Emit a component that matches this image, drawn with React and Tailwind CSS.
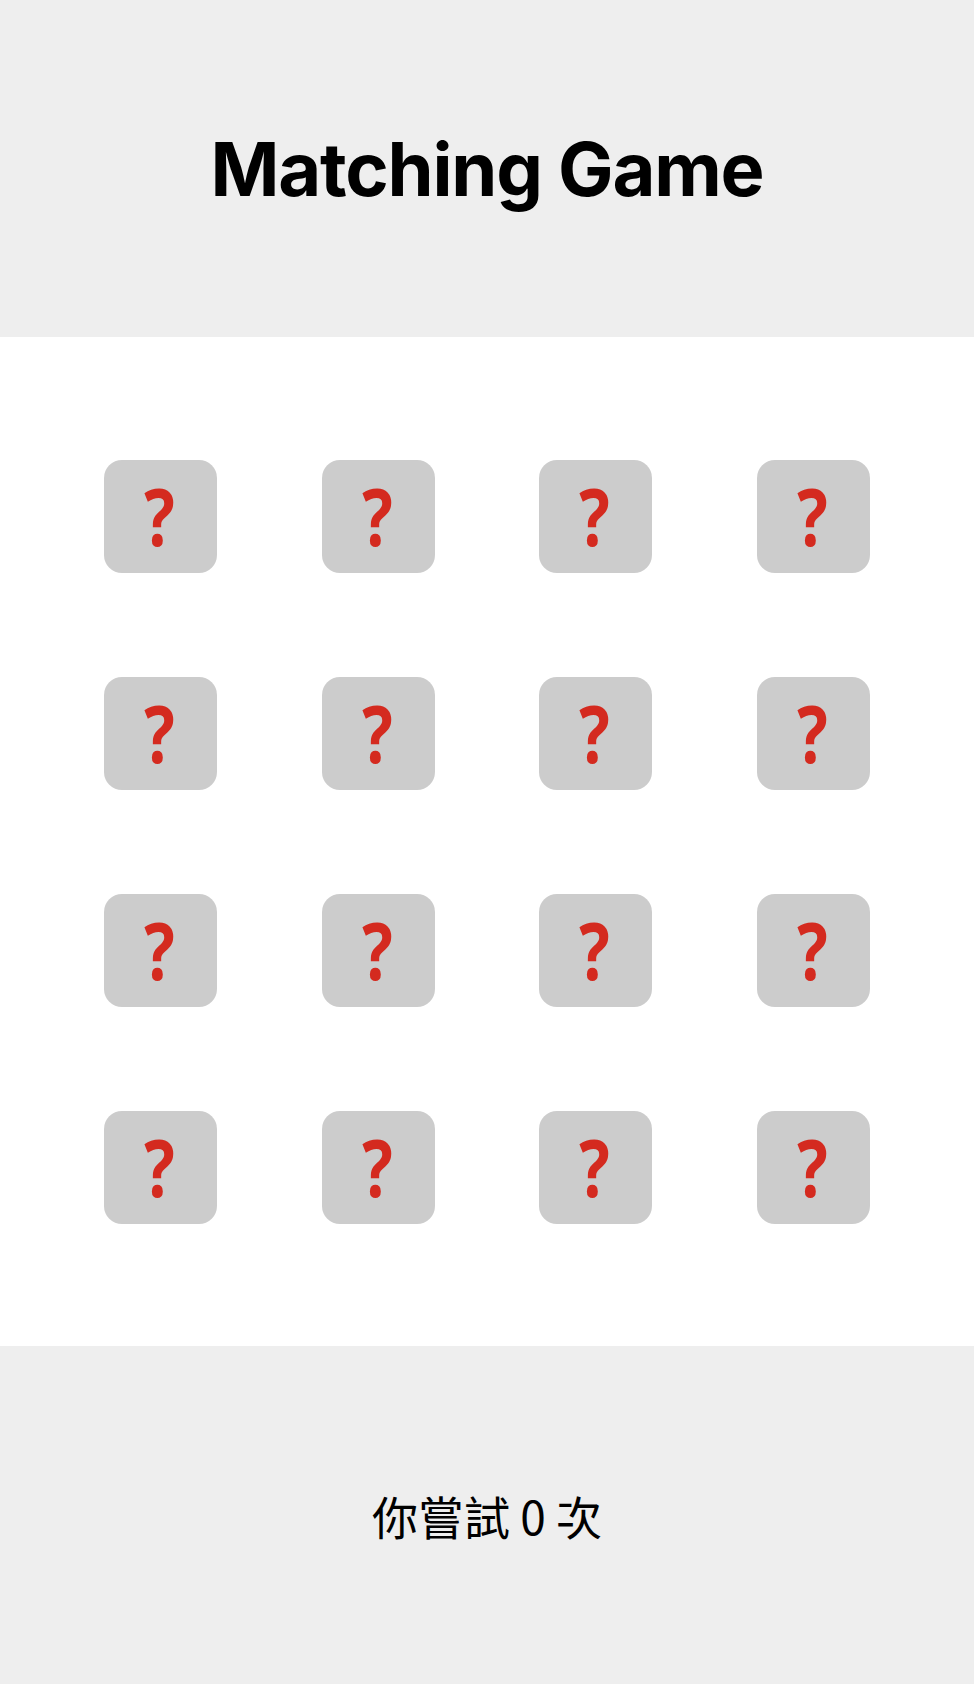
const cards = Array.from({ length: 16 }, (_, i) => i);

function Card() {
  return (
    <div className="w-[113px] h-[113px] rounded-[18px] bg-[#cccccc] flex items-center justify-center">
      <span
        className="text-[78px] font-bold leading-none text-[#d42a1f] scale-x-[0.82] translate-x-[-1px]"
        style={{ fontFamily: '"Open Sans", sans-serif' }}
      >
        ?
      </span>
    </div>
  );
}

export default function App() {
  return (
    <div className="w-full min-h-[1684px] flex flex-col bg-white">
      {/* Header */}
      <header className="h-[337px] bg-[#eeeeee] flex items-center justify-center">
        <h1
          className="text-[74px] font-bold text-black tracking-[-1.2px] leading-none"
          style={{ fontFamily: 'Inter, "Liberation Sans", sans-serif' }}
        >
          Matching Game
        </h1>
      </header>

      {/* Board */}
      <main className="h-[1009px] bg-white flex items-center justify-center">
        <div className="grid grid-cols-4 gap-x-[104.5px] gap-y-[104px]">
          {cards.map((i) => (
            <Card key={i} />
          ))}
        </div>
      </main>

      {/* Footer */}
      <footer className="h-[338px] bg-[#eeeeee] flex items-center justify-center">
        <p
          className="text-[46px] text-black leading-none"
          style={{ fontFamily: '"Noto Sans CJK TC", "Noto Sans", sans-serif' }}
        >
          你嘗試 0 次
        </p>
      </footer>
    </div>
  );
}
